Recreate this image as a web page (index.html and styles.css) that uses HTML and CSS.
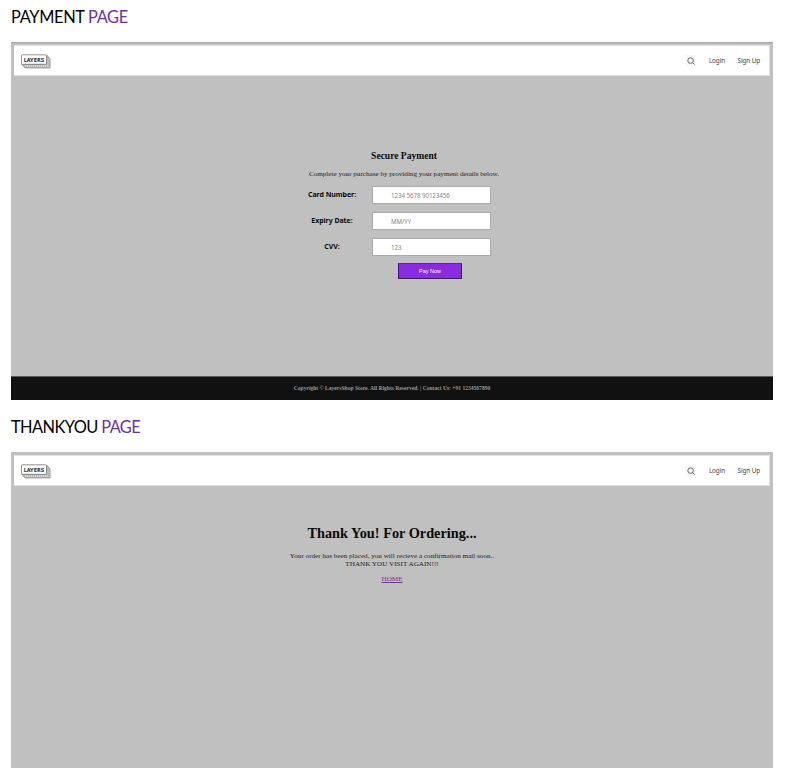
FILE: index.html
```html
<!DOCTYPE html>
<html lang="en">
<head>
<meta charset="utf-8">
<title>Layers Shop</title>
<link rel="stylesheet" href="styles.css">
</head>
<body>
<h2 class="title">PAYMENT <span>PAGE</span></h2>
<section class="screen payment">
  <header class="nav">
    <svg class="logo" viewBox="0 0 30 15">
      <path d="M.8 10.2L4 13.9H29V4.8L25.8 1.2V10.3H.8z" fill="#d6d6d6" stroke="#777" stroke-width=".8"/>
      <path d="M3 12H27.3V3" fill="none" stroke="#888" stroke-width=".7" stroke-dasharray="1 1"/>
      <rect x=".5" y=".8" width="25" height="9.5" rx=".8" fill="#fff" stroke="#777" stroke-width=".8"/>
      <text x="2.7" y="7.6" textLength="20.6" lengthAdjust="spacingAndGlyphs" class="logo-text">LAYERS</text>
    </svg>
    <nav class="links">
      <span class="search"><svg viewBox="0 0 8 8"><circle cx="3.6" cy="3.6" r="2.8"/><path d="M5.7 5.7L7.5 7.5"/></svg></span>
      <a class="login">Login</a>
      <a class="signup">Sign Up</a>
    </nav>
  </header>
  <main class="pay">
    <h3>Secure Payment</h3>
    <p>Complete your purchase by providing your payment details below.</p>
    <div class="form">
      <label>Card Number:</label><div class="field">1234 5678 90123456</div>
      <label>Expiry Date:</label><div class="field">MM/YY</div>
      <label>CVV:</label><div class="field">123</div>
    </div>
    <button type="button">Pay Now</button>
  </main>
  <footer>Copyright © LayersShop Store. All Rights Reserved. | Contact Us: +91 1234567890</footer>
</section>

<h2 class="title second">THANKYOU <span>PAGE</span></h2>
<section class="screen thanks">
  <header class="nav">
    <svg class="logo" viewBox="0 0 30 15">
      <path d="M.8 10.2L4 13.9H29V4.8L25.8 1.2V10.3H.8z" fill="#d6d6d6" stroke="#777" stroke-width=".8"/>
      <path d="M3 12H27.3V3" fill="none" stroke="#888" stroke-width=".7" stroke-dasharray="1 1"/>
      <rect x=".5" y=".8" width="25" height="9.5" rx=".8" fill="#fff" stroke="#777" stroke-width=".8"/>
      <text x="2.7" y="7.6" textLength="20.6" lengthAdjust="spacingAndGlyphs" class="logo-text">LAYERS</text>
    </svg>
    <nav class="links">
      <span class="search"><svg viewBox="0 0 8 8"><circle cx="3.6" cy="3.6" r="2.8"/><path d="M5.7 5.7L7.5 7.5"/></svg></span>
      <a class="login">Login</a>
      <a class="signup">Sign Up</a>
    </nav>
  </header>
  <main class="order">
    <h1>Thank You! For Ordering...</h1>
    <p>Your order has been placed, you will recieve a confirmation mail soon..<br>THANK YOU VISIT AGAIN!!!</p>
    <a class="home">HOME</a>
  </main>
</section>
</body>
</html>
```
FILE: styles.css
```css
* { box-sizing: border-box; }
html { overflow: hidden; }
body { margin: 0; padding: 0 0 0 11px; height: 768px; overflow: hidden; background: #fff; }
h1, h2, h3, p { margin: 0; }
.title { height: 42px; padding-top: 6px; font: 400 16.4px/21px Lato, sans-serif; letter-spacing: -.35px; color: #000; white-space: nowrap; }
.title span { color: #7030a0; }
.title.second { height: 52px; padding-top: 16px; letter-spacing: -.6px; }
.screen { width: 762px; background: #c0c0c0; padding: 3px 3px 0; display: flex; flex-direction: column; }
.payment { height: 358px; border-top: 1px solid #a49fb8; padding-top: 2px; }
.thanks { height: 330px; }
.nav { height: 31px; flex: none; background: #fff; border: 1px solid #e2e2e2; border-width: 1px 1px 1px 0; display: flex; justify-content: space-between; align-items: center; padding: 0 9px 0 6.5px; }
.logo { width: 30px; height: 15px; margin-top: 1px; }
.logo-text { font: 700 5.6px "DejaVu Sans", sans-serif; fill: #333; }
.links { display: flex; align-items: center; font: 6.4px/10px "Noto Sans", sans-serif; letter-spacing: -.12px; color: #444; white-space: nowrap; }
.search { width: 11px; height: 11px; background: #f8f8f8; display: flex; align-items: center; justify-content: center; margin-right: 12.5px; }
.search svg { width: 8px; height: 8px; fill: none; stroke: #555; stroke-width: .9; }
.login { margin-right: 12.5px; }
.pay { flex: 1; width: 192px; margin: 74px 0 0 294px; }
.pay h3 { font: 700 9.55px/12px "Liberation Serif", serif; text-align: center; color: #0a0a0a; }
.pay p { margin-top: 8px; font: 7.14px/9px "Liberation Serif", serif; text-align: center; color: #222; white-space: nowrap; }
.form { margin-top: 7px; display: grid; grid-template-columns: 48px 119px; column-gap: 15.5px; row-gap: 8px; align-items: center; }
.form label { font: 700 7px/10px "Noto Sans", sans-serif; letter-spacing: -.05px; text-align: center; color: #0a0a0a; white-space: nowrap; }
.field { height: 18px; background: #fff; border: 1px solid #aaa; padding-left: 18.5px; font: 6.2px/17px "Noto Sans", sans-serif; letter-spacing: -.06px; color: #858585; }
.pay button { display: block; width: 64px; height: 16px; margin: 7px 0 0 90px; padding: 0; background: #8a2be2; border: 1px solid #3d1c60; border-top-color: #5b2c91; font: 5.5px/13px "Liberation Sans", sans-serif; color: #fff; }
footer { flex: none; height: 24px; margin: 0 -3px; background: #111; border-top: 1px solid #555c59; color: #999; font: 700 5.57px/23px "Liberation Serif", serif; text-align: center; }
.order { padding-top: 38px; text-align: center; color: #222; font: 7.15px/8px "Liberation Serif", serif; }
.order h1 { font: 700 14.3px/18px "Liberation Serif", serif; color: #0a0a0a; }
.order p { margin: 10px 0 7px; }
.home { color: #6f2f94; text-decoration: underline; }
```
